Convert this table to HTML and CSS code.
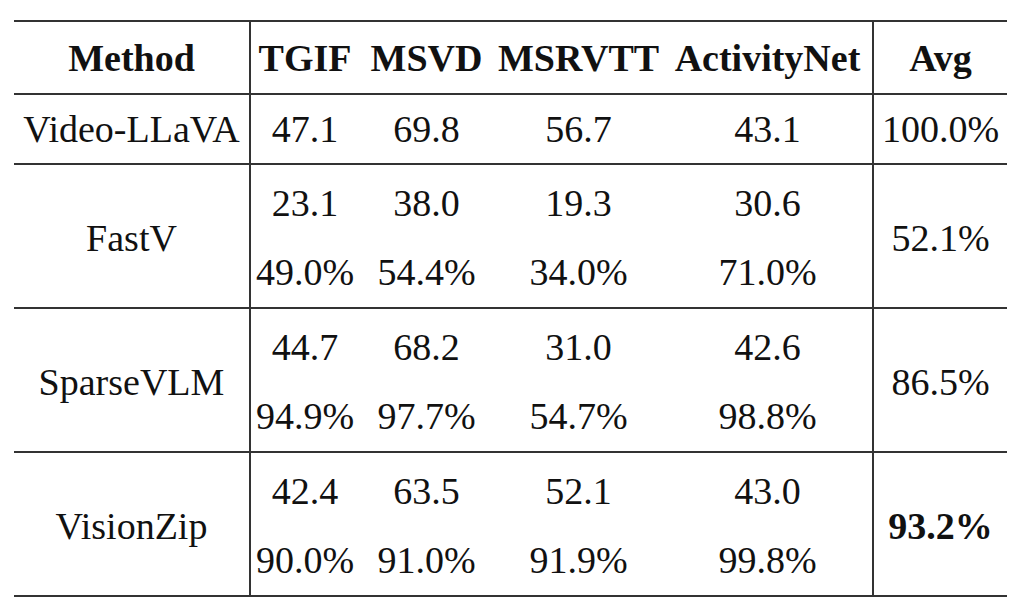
FILE: index.html
```html
<!DOCTYPE html>
<html lang="en">
<head>
<meta charset="utf-8">
<title>Video benchmark results</title>
<link rel="stylesheet" href="styles.css">
</head>
<body>
<div class="page">
<table class="results">
  <colgroup>
    <col class="c-method">
    <col class="c-tgif">
    <col class="c-msvd">
    <col class="c-msrvtt">
    <col class="c-anet">
    <col class="c-avg">
  </colgroup>
  <thead>
    <tr class="head">
      <th class="method">Method</th>
      <th>TGIF</th>
      <th>MSVD</th>
      <th>MSRVTT</th>
      <th>ActivityNet</th>
      <th class="avg">Avg</th>
    </tr>
  </thead>
  <tbody>
    <tr class="single group-end">
      <td class="method">Video-LLaVA</td>
      <td>47.1</td>
      <td>69.8</td>
      <td>56.7</td>
      <td>43.1</td>
      <td class="avg">100.0%</td>
    </tr>
    <tr class="sub top">
      <td class="method" rowspan="2">FastV</td>
      <td>23.1</td>
      <td>38.0</td>
      <td>19.3</td>
      <td>30.6</td>
      <td class="avg" rowspan="2">52.1%</td>
    </tr>
    <tr class="sub bottom group-end">
      <td>49.0%</td>
      <td>54.4%</td>
      <td>34.0%</td>
      <td>71.0%</td>
    </tr>
    <tr class="sub top">
      <td class="method" rowspan="2">SparseVLM</td>
      <td>44.7</td>
      <td>68.2</td>
      <td>31.0</td>
      <td>42.6</td>
      <td class="avg" rowspan="2">86.5%</td>
    </tr>
    <tr class="sub bottom group-end">
      <td>94.9%</td>
      <td>97.7%</td>
      <td>54.7%</td>
      <td>98.8%</td>
    </tr>
    <tr class="sub top">
      <td class="method" rowspan="2">VisionZip</td>
      <td>42.4</td>
      <td>63.5</td>
      <td>52.1</td>
      <td>43.0</td>
      <td class="avg best" rowspan="2">93.2%</td>
    </tr>
    <tr class="sub bottom group-end">
      <td>90.0%</td>
      <td>91.0%</td>
      <td>91.9%</td>
      <td>99.8%</td>
    </tr>
  </tbody>
</table>
</div>
</body>
</html>
```
FILE: styles.css
```css
html, body {
  margin: 0;
  padding: 0;
  background: #ffffff;
}

.page {
  padding: 20px 0 0 14px;
}

.results {
  border-collapse: collapse;
  table-layout: fixed;
  width: 993px;
  font-family: "Liberation Serif", "Times New Roman", serif;
  font-size: 38px;
  color: #111111;
  border-top: 2px solid #333333;
}

.c-method { width: 236px; }
.c-tgif { width: 109px; }
.c-msvd { width: 135px; }
.c-msrvtt { width: 169px; }
.c-anet { width: 210px; }
.c-avg { width: 134px; }

.results th,
.results td {
  padding: 0;
  text-align: center;
  vertical-align: middle;
  white-space: nowrap;
  line-height: 42px;
}

.results th {
  font-weight: bold;
}

.results .method {
  border-right: 2px solid #333333;
}

.results .avg {
  border-left: 2px solid #333333;
}

.head {
  height: 73px;
  border-bottom: 2px solid #333333;
}

.single {
  height: 70px;
}

.sub {
  height: 72px;
}

.sub.top td {
  padding-top: 4px;
}

.group-end {
  border-bottom: 2px solid #333333;
}

.best {
  font-weight: bold;
}
```
